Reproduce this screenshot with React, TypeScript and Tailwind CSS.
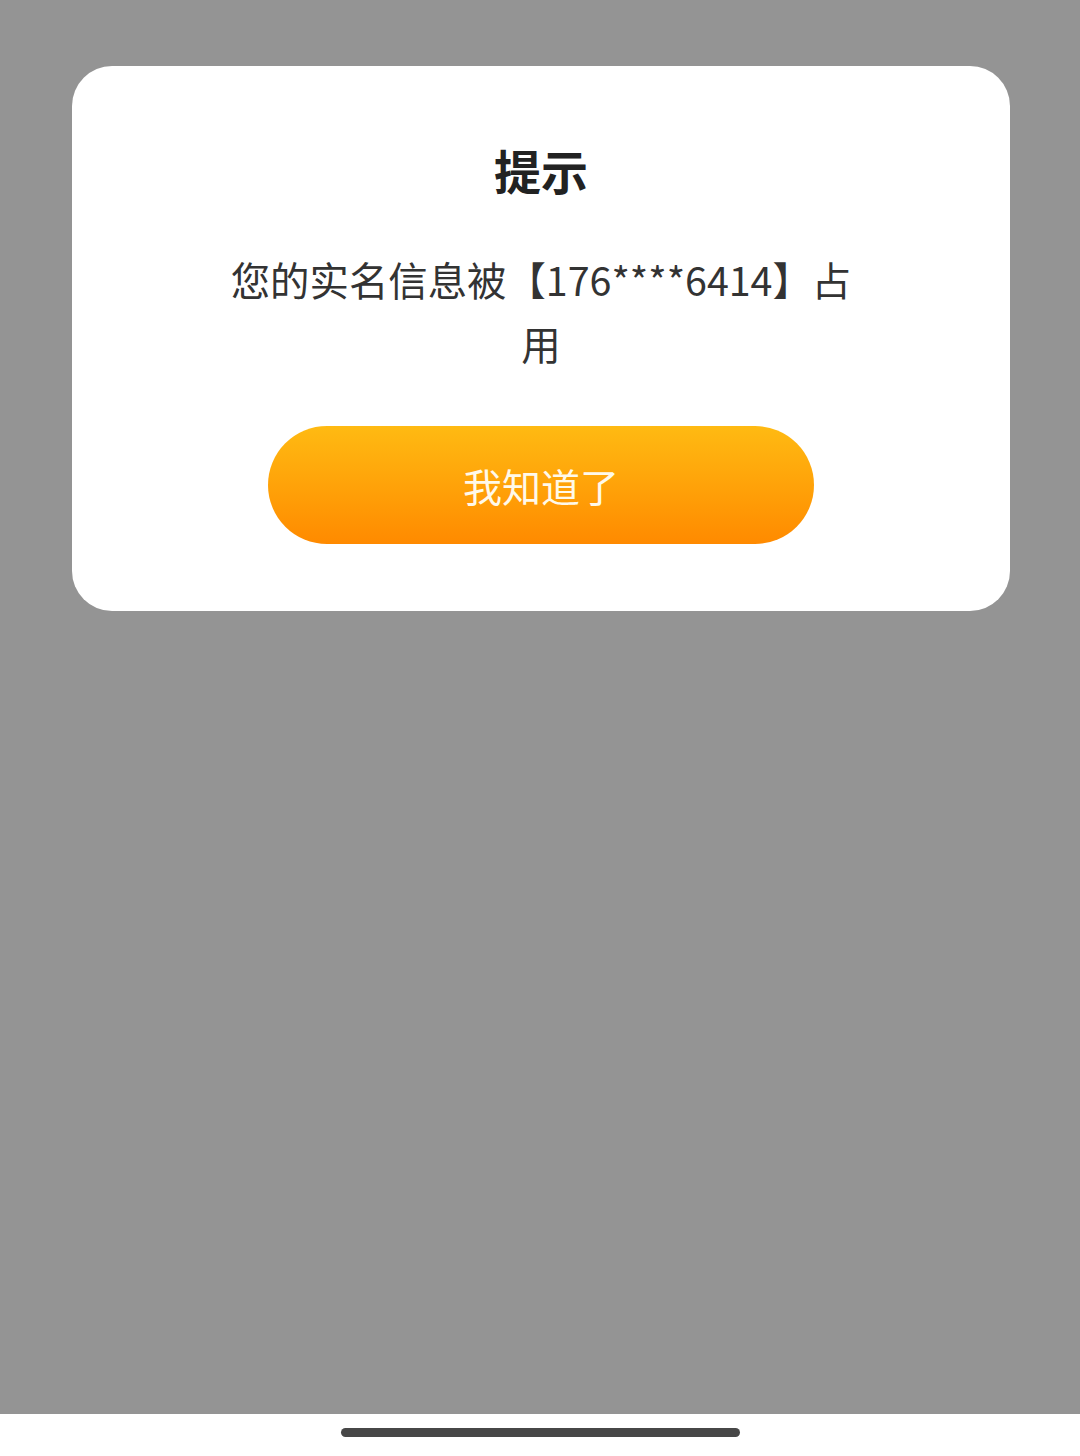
export default function App() {
  return (
    <div className="flex flex-col w-[1080px] h-[1456px] bg-[#949494] font-['Noto_Sans_CJK_SC','Noto_Sans',sans-serif]">
      <div className="flex-1 pt-[66px] pl-[72px]">
        <div className="flex flex-col items-center w-[938px] bg-white rounded-[40px] pt-[72px] pb-[67px]">
          <div className="text-[47px] leading-[64px] font-bold text-[#222222]">
            提示
          </div>
          <div className="mt-[45px] w-[640px] text-center text-[39.4px] leading-[64px] text-[#333333]">
            您的实名信息被【176****6414】占用
          </div>
          <button className="mt-[51px] w-[546px] h-[118px] rounded-full bg-gradient-to-b from-[#FFBA12] to-[#FF8A00] text-[39px] text-[#FFF9EA] flex items-center justify-center">
            我知道了
          </button>
        </div>
      </div>
      <div className="h-[42px] bg-white flex justify-center pt-[14px]">
        <div className="w-[399px] h-[9px] rounded-full bg-[#474747]" />
      </div>
    </div>
  );
}
